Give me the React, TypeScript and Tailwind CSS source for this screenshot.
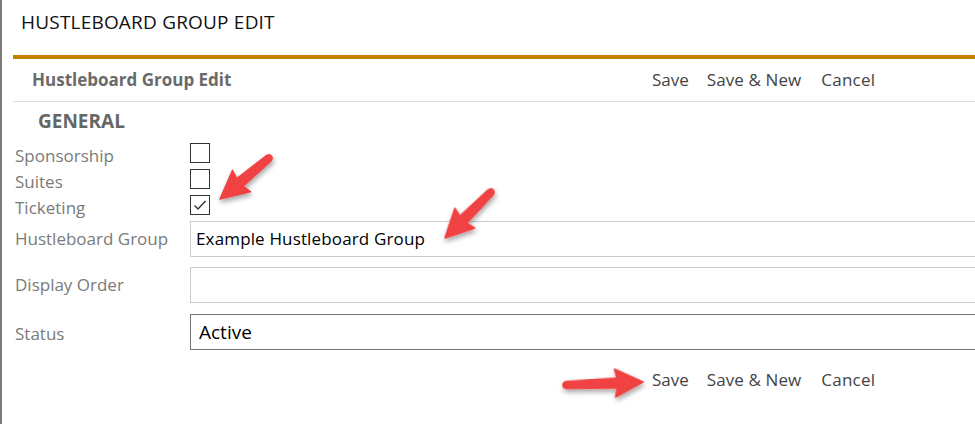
import React from "react";

type Pt = { x1: number; y1: number; x2: number; y2: number };

const arrows: Pt[] = [
  { x1: 267, y1: 158, x2: 218, y2: 199 },
  { x1: 489, y1: 192, x2: 443, y2: 238 },
  { x1: 564, y1: 385, x2: 641, y2: 382 },
];

const Arrow: React.FC<Pt> = ({ x1, y1, x2, y2 }) => {
  const len = Math.hypot(x2 - x1, y2 - y1);
  const angle = (Math.atan2(y2 - y1, x2 - x1) * 180) / Math.PI;
  const h = 28;
  const points = `0,-3.5 ${len - h + 2},-5 ${len - h},-14 ${len},0 ${len - h},14 ${len - h + 2},5 0,3.5`;
  return (
    <g transform={`translate(${x1} ${y1}) rotate(${angle})`}>
      <polygon points={points} fill="#f04343" strokeLinejoin="round" stroke="#f04343" strokeWidth="1.5" />
      <circle cx="0" cy="0" r="3.8" fill="#f04343" />
    </g>
  );
};

const CheckRow: React.FC<{ label: string; checked?: boolean }> = ({ label, checked }) => (
  <div className="flex h-[26px] items-center">
    <div className="w-[175px] shrink-0 pt-[6px] text-[17px] leading-[22px] text-[#7a7a7a]">{label}</div>
    <div className="flex h-[20px] w-[20px] shrink-0 items-center justify-center border border-[#333]">
      {checked && (
        <svg width="14" height="12" viewBox="0 0 14 12">
          <path d="M1.5 6.5 L5 10 L12.5 2" fill="none" stroke="#333" strokeWidth="1.4" />
        </svg>
      )}
    </div>
  </div>
);

const Actions: React.FC = () => (
  <div className="flex items-center text-[17px] text-[#444]">
    <span>Save</span>
    <span className="ml-[18px] tracking-[0.1px]">Save &amp; New</span>
    <span className="ml-[20px] tracking-[0.2px]">Cancel</span>
  </div>
);

export default function App() {
  return (
    <div
      className="relative h-[424px] w-[975px] overflow-hidden border-l-2 border-[#7b7b7b] bg-white"
      style={{ fontFamily: '"Open Sans", "Noto Sans", sans-serif' }}
    >
      <div className="h-[55px] pl-[19px] pt-[9px] text-[19px] leading-[26px] tracking-[0.2px] text-[#111]">
        HUSTLEBOARD GROUP EDIT
      </div>

      <div className="ml-[11px] w-[1000px] border-t-4 border-[#c48100]">
        <div className="flex h-[43px] items-center border-b border-[#dddddd]">
          <div className="w-[639px] shrink-0 pl-[19px] text-[17px] font-bold text-[#6a6a6a]">Hustleboard Group Edit</div>
          <Actions />
        </div>
        <div className="flex h-[38px] items-center pl-[25px] text-[19px] font-bold text-[#666]">GENERAL</div>
      </div>

      <div className="pl-[13px]">
        <CheckRow label="Sponsorship" />
        <CheckRow label="Suites" />
        <CheckRow label="Ticketing" checked />

        <div className="mt-[3px] flex items-center">
          <div className="w-[175px] shrink-0 text-[17px] text-[#7a7a7a]">Hustleboard Group</div>
          <div className="flex h-[36px] w-[800px] shrink-0 items-center border border-[#cccccc] pl-[5px] text-[17px] tracking-[0.15px] text-black">
            Example Hustleboard Group
          </div>
        </div>

        <div className="mt-[10px] flex items-center">
          <div className="w-[175px] shrink-0 text-[17px] text-[#7a7a7a]">Display Order</div>
          <div className="h-[36px] w-[800px] shrink-0 border border-[#cccccc]" />
        </div>

        <div className="mt-[11px] flex items-center">
          <div className="w-[175px] shrink-0 pt-[3px] text-[17px] text-[#7a7a7a]">Status</div>
          <div className="flex h-[36px] w-[800px] shrink-0 items-center border border-[#777] pl-[8px] text-[19px] text-black">
            Active
          </div>
        </div>
      </div>

      <div className="flex h-[60px] items-center pl-[650px]">
        <Actions />
      </div>

      <svg className="pointer-events-none absolute left-0 top-0" width="975" height="424">
        <defs>
          <filter id="sh" x="-20%" y="-20%" width="140%" height="140%">
            <feDropShadow dx="1" dy="3" stdDeviation="2.5" floodColor="#000" floodOpacity="0.35" />
          </filter>
        </defs>
        <g filter="url(#sh)">
          {arrows.map((a, i) => (
            <Arrow key={i} {...a} />
          ))}
        </g>
      </svg>
    </div>
  );
}
